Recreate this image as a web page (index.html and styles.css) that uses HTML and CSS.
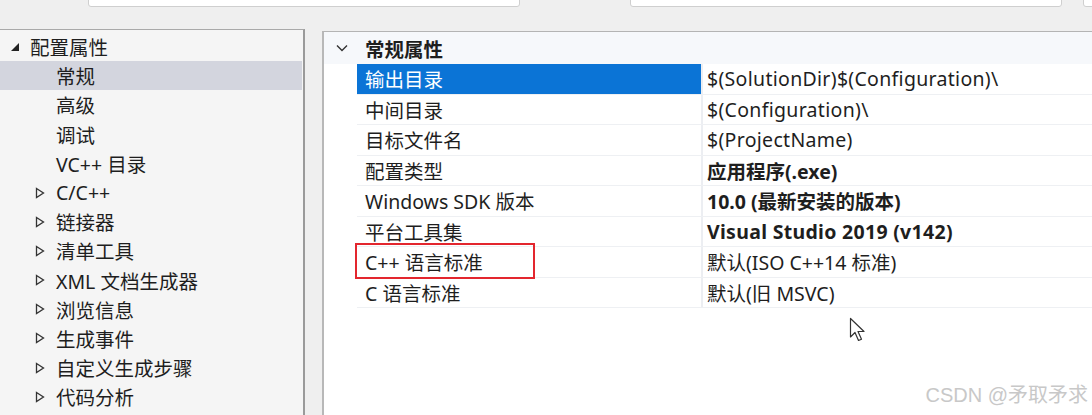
FILE: index.html
```html
<!DOCTYPE html>
<html lang="zh-CN">
<head>
  <meta charset="UTF-8" />
  <title>属性页</title>
  <link rel="stylesheet" href="styles.css">
</head>
<body>
  <div class="topbar">
    <div class="field field-config"></div>
    <div class="field field-platform"></div>
    <div class="field field-more"></div>
  </div>

  <div class="main">
    <div class="tree">
      <div class="node root">
        <svg class="tri" width="12" height="12" viewBox="0 0 12 12"><path d="M10 2 L10 10 L2 10 Z" fill="#222"/></svg>
        <span>配置属性</span>
      </div>
      <div class="node child selected"><span>常规</span></div>
      <div class="node child"><span>高级</span></div>
      <div class="node child"><span>调试</span></div>
      <div class="node child"><span>VC++ 目录</span></div>
      <div class="node group"><svg class="tri" width="12" height="12" viewBox="0 0 12 12"><path d="M2.5 1.5 L9.5 6 L2.5 10.5 Z" fill="none" stroke="#333" stroke-width="1.3"/></svg><span>C/C++</span></div>
      <div class="node group"><svg class="tri" width="12" height="12" viewBox="0 0 12 12"><path d="M2.5 1.5 L9.5 6 L2.5 10.5 Z" fill="none" stroke="#333" stroke-width="1.3"/></svg><span>链接器</span></div>
      <div class="node group"><svg class="tri" width="12" height="12" viewBox="0 0 12 12"><path d="M2.5 1.5 L9.5 6 L2.5 10.5 Z" fill="none" stroke="#333" stroke-width="1.3"/></svg><span>清单工具</span></div>
      <div class="node group"><svg class="tri" width="12" height="12" viewBox="0 0 12 12"><path d="M2.5 1.5 L9.5 6 L2.5 10.5 Z" fill="none" stroke="#333" stroke-width="1.3"/></svg><span>XML 文档生成器</span></div>
      <div class="node group"><svg class="tri" width="12" height="12" viewBox="0 0 12 12"><path d="M2.5 1.5 L9.5 6 L2.5 10.5 Z" fill="none" stroke="#333" stroke-width="1.3"/></svg><span>浏览信息</span></div>
      <div class="node group"><svg class="tri" width="12" height="12" viewBox="0 0 12 12"><path d="M2.5 1.5 L9.5 6 L2.5 10.5 Z" fill="none" stroke="#333" stroke-width="1.3"/></svg><span>生成事件</span></div>
      <div class="node group"><svg class="tri" width="12" height="12" viewBox="0 0 12 12"><path d="M2.5 1.5 L9.5 6 L2.5 10.5 Z" fill="none" stroke="#333" stroke-width="1.3"/></svg><span>自定义生成步骤</span></div>
      <div class="node group"><svg class="tri" width="12" height="12" viewBox="0 0 12 12"><path d="M2.5 1.5 L9.5 6 L2.5 10.5 Z" fill="none" stroke="#333" stroke-width="1.3"/></svg><span>代码分析</span></div>
    </div>

    <div class="grid">
      <div class="section">
        <svg class="chevron" width="14" height="10" viewBox="0 0 14 10"><path d="M2 2.5 L7 7.5 L12 2.5" fill="none" stroke="#333" stroke-width="1.4"/></svg>
        <span>常规属性</span>
      </div>
      <div class="row selected"><div class="name">输出目录</div><div class="value latin">$(SolutionDir)$(Configuration)\</div></div>
      <div class="row"><div class="name">中间目录</div><div class="value latin">$(Configuration)\</div></div>
      <div class="row"><div class="name">目标文件名</div><div class="value latin">$(ProjectName)</div></div>
      <div class="row"><div class="name">配置类型</div><div class="value bold">应用程序(.exe)</div></div>
      <div class="row"><div class="name">Windows SDK 版本</div><div class="value bold">10.0 (最新安装的版本)</div></div>
      <div class="row"><div class="name">平台工具集</div><div class="value bold latin">Visual Studio 2019 (v142)</div></div>
      <div class="row"><div class="name marked">C++ 语言标准</div><div class="value">默认(ISO C++14 标准)</div></div>
      <div class="row"><div class="name">C 语言标准</div><div class="value">默认(旧 MSVC)</div></div>

      <svg class="cursor" width="18" height="26" viewBox="0 0 18 26"><path d="M1.5 1.5 L1.5 20 L6 15.5 L9.5 23.5 L12.5 22.2 L9 14.5 L15 14.5 Z" fill="#fff" stroke="#333" stroke-width="1.2" stroke-linejoin="round"/></svg>
    </div>
  </div>

  <div class="watermark">CSDN @矛取矛求</div>
</body>
</html>
```

FILE: styles.css
```css
body {
  margin: 0;
  background-color: #efefef;
  font-family: 'Noto Sans', 'Noto Sans CJK SC', sans-serif;
  font-size: 19.5px;
  color: #1e1e1e;
  width: 1092px;
  height: 415px;
  overflow: hidden;
  position: relative;
}

.topbar {
  height: 29px;
  display: flex;
  align-items: flex-start;
}

.field {
  flex: none;
  height: 20px;
  margin-top: -13px;
  background-color: #fff;
  border: 1px solid #cfcfcf;
  border-radius: 3px;
  box-sizing: border-box;
}

.field-config {
  margin-left: 88px;
  width: 432px;
}

.field-platform {
  margin-left: 110px;
  width: 432px;
}

.field-more {
  margin-left: 21px;
  width: 40px;
}

.main {
  display: flex;
  height: 386px;
}

/* tree on the left */
.tree {
  width: 305px;
  flex: none;
  box-sizing: border-box;
  background-color: #f5f5f5;
  border-top: 1px solid #a9a9a9;
  border-right: 2px solid #9a9a9a;
  padding-top: 2px;
}

.node {
  height: 29.2px;
  display: flex;
  align-items: center;
  white-space: nowrap;
}

.node .tri {
  flex: none;
}

.root {
  padding-left: 9px;
}

.root .tri {
  margin-right: 9px;
}

.child {
  padding-left: 56px;
}

.group {
  padding-left: 34px;
}

.group .tri {
  margin-right: 10px;
}

.selected {
  background-color: #d3d5de;
}

.tree .selected {
  margin-right: 1px;
}

/* property grid */
.grid {
  flex: 1;
  margin-left: 17px;
  margin-top: 2px;
  background-color: #fff;
  border-top: 1px solid #b4b4b4;
  border-left: 2px solid #b8b8b8;
  position: relative;
}

.section {
  height: 32px;
  display: flex;
  align-items: center;
  font-weight: bold;
  background-color: #f6f8fb;
  padding-left: 11px;
}

.chevron {
  margin-right: 16px;
}

.row {
  display: flex;
  height: 30.5px;
  margin-left: 33px;
  border-bottom: 1px solid #eef0f3;
  box-sizing: border-box;
}

.name {
  width: 346px;
  flex: none;
  padding-left: 8px;
  box-sizing: border-box;
  display: flex;
  align-items: center;
  border-right: 2px solid #eceef2;
  position: relative;
}

.row.selected {
  background-color: transparent;
}

.row.selected .name {
  background-color: #0b74d6;
  color: #fff;
}

.value {
  padding-left: 4px;
  display: flex;
  align-items: center;
  white-space: nowrap;
}

.latin {
  letter-spacing: 0.3px;
}

.bold {
  font-weight: bold;
}

.marked::after {
  content: "";
  position: absolute;
  left: -2px;
  top: -4px;
  width: 180px;
  height: 36px;
  border: 2px solid #e3262e;
  box-sizing: border-box;
}

.cursor {
  position: absolute;
  left: 525px;
  top: 285px;
}

.watermark {
  position: absolute;
  right: 4px;
  bottom: 7px;
  color: #c8c8c8;
  font-family: 'Liberation Sans', 'Noto Sans CJK SC', sans-serif;
  font-size: 20px;
}
```
